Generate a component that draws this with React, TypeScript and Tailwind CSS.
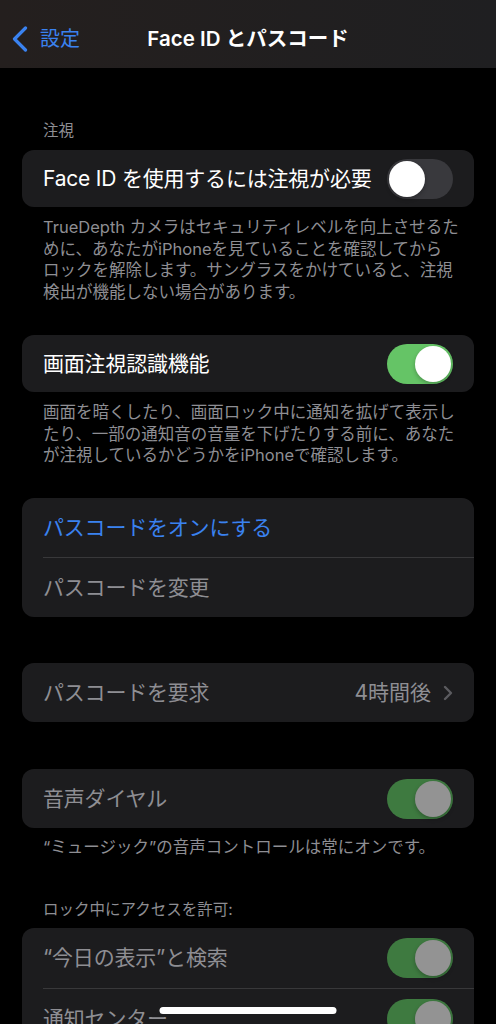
import * as React from 'react';

const FONT = "font-['Inter','Noto_Sans_CJK_JP',sans-serif]";

// トグルスイッチ（on / off / disabled）
function Toggle({ on, disabled = false }: { on: boolean; disabled?: boolean }) {
  const track = !on ? 'bg-[#39393d]' : disabled ? 'bg-[#3e7a40]' : 'bg-[#65c466]';
  const knob = disabled ? 'bg-[#939393]' : 'bg-white';
  return (
    <div
      className={`flex h-[40px] w-[66px] shrink-0 items-center rounded-full p-[2px] ${track} ${
        on ? 'justify-end' : 'justify-start'
      }`}
    >
      <div className={`size-[36px] rounded-full shadow-[0_2px_4px_rgba(0,0,0,0.25)] ${knob}`} />
    </div>
  );
}

function Chevron() {
  return (
    <svg width="10" height="16" viewBox="0 0 10 16" fill="none" className="shrink-0">
      <path
        d="M2 2 L8 8 L2 14"
        stroke="#5b5b5f"
        strokeWidth="2.4"
        strokeLinecap="round"
        strokeLinejoin="round"
      />
    </svg>
  );
}

function Row({
  label,
  tone = 'white',
  height = 'h-[57px]',
  right,
}: {
  label: string;
  tone?: 'white' | 'blue' | 'gray';
  height?: string;
  right?: React.ReactNode;
}) {
  const color =
    tone === 'blue' ? 'text-[#3a82f0]' : tone === 'gray' ? 'text-[#8e8e93]' : 'text-white';
  return (
    <div className={`flex items-center justify-between pl-[21px] pr-[21px] ${height}`}>
      <span className={`whitespace-nowrap text-[21px] leading-[28px] tracking-[-0.2px] ${color}`}>
        {label}
      </span>
      {right}
    </div>
  );
}

function Separator() {
  return <div className="ml-[21px] h-px bg-[#38383a]" />;
}

function Card({ className = '', children }: { className?: string; children: React.ReactNode }) {
  return <div className={`overflow-hidden rounded-[12px] bg-[#1c1c1e] ${className}`}>{children}</div>;
}

function Footer({ lines, className = '' }: { lines: string[]; className?: string }) {
  return (
    <div className={`pl-[21px] text-[16.5px] leading-[21.5px] text-[#8e8e93] ${className}`}>
      {lines.map((l) => (
        <div key={l} className="whitespace-nowrap">
          {l}
        </div>
      ))}
    </div>
  );
}

function SectionHeader({ text, className = '' }: { text: string; className?: string }) {
  return (
    <div className={`h-[20px] pl-[21px] text-[15.5px] leading-[20px] text-[#8e8e93] ${className}`}>
      {text}
    </div>
  );
}

function NavBar() {
  return (
    <div className="grid h-[68px] grid-cols-[1fr_auto_1fr] items-center bg-linear-to-r from-[#241f1e] to-[#1f1f21] pt-[10px]">
      <div className="flex items-center pl-[12px]">
        <svg width="16" height="26" viewBox="0 0 16 26" fill="none">
          <path
            d="M13.5 2 L2.5 13 L13.5 24"
            stroke="#3a82f0"
            strokeWidth="3.2"
            strokeLinecap="round"
            strokeLinejoin="round"
          />
        </svg>
        <span className="ml-[12px] text-[20px] leading-[26px] text-[#3a82f0]">設定</span>
      </div>
      <div className="whitespace-nowrap text-[20.5px] font-semibold leading-[26px] text-white">
        Face ID とパスコード
      </div>
      <div />
    </div>
  );
}

export default function App() {
  return (
    <div className={`relative h-[1024px] w-[496px] overflow-hidden bg-black ${FONT}`}>
      <NavBar />

      <div className="px-[22px]">
        <SectionHeader text="注視" className="mt-[53px]" />
        <Card className="mt-[9px]">
          <Row label="Face ID を使用するには注視が必要" right={<Toggle on={false} />} />
        </Card>
        <Footer
          className="mt-[10px]"
          lines={[
            'TrueDepth カメラはセキュリティレベルを向上させるた',
            'めに、あなたがiPhoneを見ていることを確認してから',
            'ロックを解除します。サングラスをかけていると、注視',
            '検出が機能しない場合があります。',
          ]}
        />

        <Card className="mt-[32px]">
          <Row label="画面注視認識機能" right={<Toggle on />} />
        </Card>
        <Footer
          className="mt-[10px]"
          lines={[
            '画面を暗くしたり、画面ロック中に通知を拡げて表示し',
            'たり、一部の通知音の音量を下げたりする前に、あなた',
            'が注視しているかどうかをiPhoneで確認します。',
          ]}
        />

        <Card className="mt-[31.5px]">
          <Row label="パスコードをオンにする" tone="blue" height="h-[59px]" />
          <Separator />
          <Row label="パスコードを変更" tone="gray" height="h-[59px]" />
        </Card>

        <Card className="mt-[46px]">
          <Row
            label="パスコードを要求"
            tone="gray"
            height="h-[59px]"
            right={
              <div className="flex items-center gap-[12px]">
                <span className="text-[21px] leading-[28px] text-[#8e8e93]">4時間後</span>
                <Chevron />
              </div>
            }
          />
        </Card>

        <Card className="mt-[47px]">
          <Row label="音声ダイヤル" tone="gray" height="h-[59px]" right={<Toggle on disabled />} />
        </Card>
        <Footer className="mt-[9px]" lines={['“ミュージック”の音声コントロールは常にオンです。']} />

        <SectionHeader text="ロック中にアクセスを許可:" className="mt-[41.5px]" />
        <Card className="mt-[8px]">
          <Row label="“今日の表示”と検索" tone="gray" height="h-[60px]" right={<Toggle on disabled />} />
          <Separator />
          <Row label="通知センター" tone="gray" height="h-[60px]" right={<Toggle on disabled />} />
        </Card>
      </div>

      {/* ホームインジケーター */}
      <div className="absolute left-1/2 top-[1007px] h-[7px] w-[177px] -translate-x-1/2 rounded-full bg-white" />
    </div>
  );
}
